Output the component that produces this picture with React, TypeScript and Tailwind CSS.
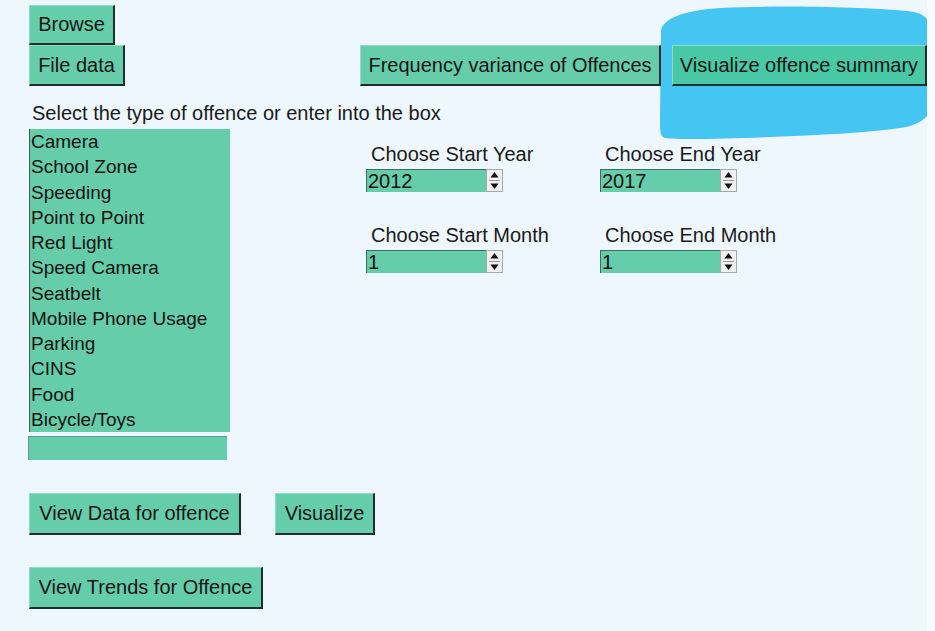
import React from "react";

const offences = [
  "Camera",
  "School Zone",
  "Speeding",
  "Point to Point",
  "Red Light",
  "Speed Camera",
  "Seatbelt",
  "Mobile Phone Usage",
  "Parking",
  "CINS",
  "Food",
  "Bicycle/Toys",
];

function TkButton({
  label,
  className = "",
}: {
  label: string;
  className?: string;
}) {
  return (
    <button
      className={`flex items-center justify-center whitespace-nowrap border-t border-l border-r-2 border-b-2 border-t-[#8fdcc3] border-l-[#8fdcc3] border-r-[#1c2f29] border-b-[#1c2f29] text-[20px] leading-[23px] text-[#161616] ${className}`}
    >
      {label}
    </button>
  );
}

function Arrows() {
  return (
    <svg width="17" height="23" viewBox="0 0 17 23" className="block">
      <rect x="0.5" y="0.5" width="16" height="22" fill="#f0f0f0" stroke="#a8a8a8" />
      <line x1="3" y1="11.5" x2="14" y2="11.5" stroke="#9a9a9a" />
      <path d="M8.5 3 L12.5 8.5 L4.5 8.5 Z" fill="#111" />
      <path d="M8.5 20 L12.5 14.5 L4.5 14.5 Z" fill="#111" />
    </svg>
  );
}

function Spinbox({ label, value }: { label: string; value: string }) {
  return (
    <div className="flex flex-col">
      <span className="ml-[5px] whitespace-nowrap text-[20px] leading-[23px] text-[#1a1a1a]">
        {label}
      </span>
      <div className="mt-[3px] flex h-[23px] w-[137px]">
        <div className="flex-1 border-l border-t border-[#3e6e5e] bg-[#66cdaa] pl-[1px] text-[20px] leading-[22px] text-[#111]">
          {value}
        </div>
        <Arrows />
      </div>
    </div>
  );
}

export default function App() {
  return (
    <div
      className="relative flex h-[631px] w-[935px] overflow-hidden bg-[#eef6fe]"
      style={{ fontFamily: '"Liberation Sans", Arial, sans-serif' }}
    >
      {/* highlighter mark over the summary button */}
      <svg
        aria-hidden
        className="pointer-events-none absolute left-[655px] top-0"
        width="280"
        height="145"
        viewBox="0 0 280 145"
      >
        <path
          d="M6 32 C6 18, 32 10, 65 8 C125 5, 205 7, 252 11 C272 13, 276 20, 276 38 L278 96 C278 112, 272 124, 245 128 C210 133, 165 135, 115 137 C65 139, 25 140, 10 138 C5 137, 5 130, 5 120 Z"
          fill="#45c5f1"
        />
      </svg>

      <div className="relative flex w-[927px] flex-col pl-[29px]">
        <TkButton label="Browse" className="mt-[5px] h-[40px] w-[86px] bg-[#66cdaa]" />

        <div className="flex">
          <TkButton label="File data" className="h-[41px] w-[96px] bg-[#66cdaa]" />
          <TkButton
            label="Frequency variance of Offences"
            className="ml-[235px] h-[41px] w-[301px] bg-[#66cdaa]"
          />
          <TkButton
            label="Visualize offence summary"
            className="ml-[11px] h-[41px] w-[255px] bg-[#48c8a4]"
          />
        </div>

        <p className="ml-[3px] mt-[16px] text-[20px] leading-[23px] text-[#1a1a1a]">
          Select the type of offence or enter into the box
        </p>

        <div className="mt-[4px] flex">
          <div className="flex w-[201px] flex-col">
            <ul className="h-[303px] border-l border-[#3a5f52] bg-[#66cdaa] pl-[1px] text-[19px] leading-[25.25px] text-[#121212]">
              {offences.map((o) => (
                <li key={o}>{o}</li>
              ))}
            </ul>
            <div className="-ml-[1px] mt-[4px] h-[24px] w-[199px] border-l border-t border-[#5f9b87] bg-[#66cdaa]" />

            <div className="mt-[33px] flex gap-[34px]">
              <TkButton label="View Data for offence" className="h-[42px] w-[212px] shrink-0 bg-[#66cdaa]" />
              <TkButton label="Visualize" className="h-[42px] w-[100px] shrink-0 bg-[#66cdaa]" />
            </div>
            <TkButton
              label="View Trends for Offence"
              className="mt-[32px] h-[42px] w-[234px] bg-[#66cdaa]"
            />
          </div>

          <div className="ml-[136px] mt-[14px] grid h-fit grid-cols-[234px_137px] gap-y-[32px]">
            <Spinbox label="Choose Start Year" value="2012" />
            <Spinbox label="Choose End Year" value="2017" />
            <Spinbox label="Choose Start Month" value="1" />
            <Spinbox label="Choose End Month" value="1" />
          </div>
        </div>
      </div>

      <div className="relative w-[8px] bg-[#f7fafe]" />
    </div>
  );
}
